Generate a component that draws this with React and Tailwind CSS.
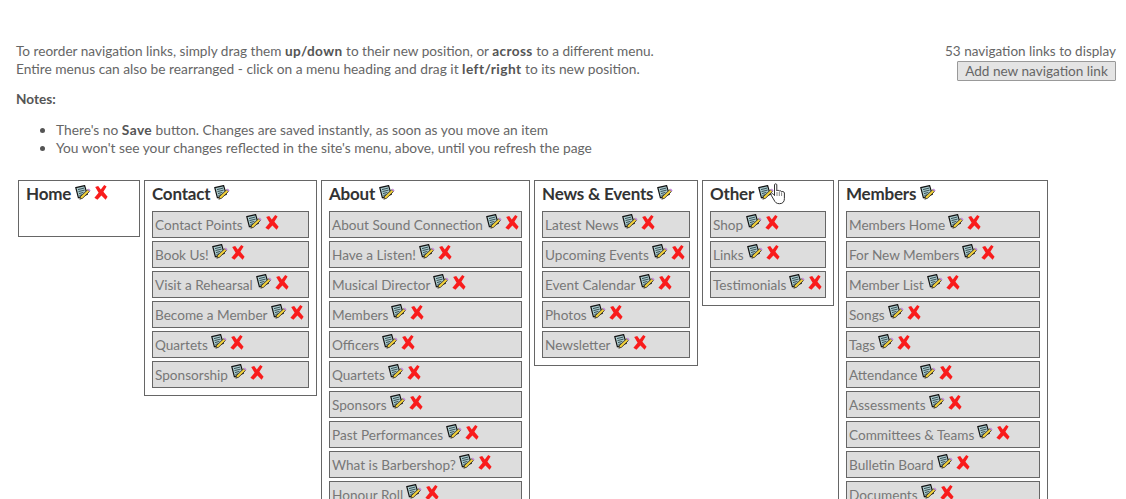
const menus = [
  { title: "Home", w: "w-[122px]", h: "h-[57px]", x: true, items: [] },
  { title: "Contact", w: "w-[173px]", h: "", items: ["Contact Points", "Book Us!", "Visit a Rehearsal", "Become a Member", "Quartets", "Sponsorship"] },
  { title: "About", w: "w-[209px]", h: "", items: ["About Sound Connection", "Have a Listen!", "Musical Director", "Members", "Officers", "Quartets", "Sponsors", "Past Performances", "What is Barbershop?", "Honour Roll"] },
  { title: "News & Events", w: "w-[164px]", h: "", items: ["Latest News", "Upcoming Events", "Event Calendar", "Photos", "Newsletter"] },
  { title: "Other", w: "w-[132px]", h: "", hand: true, items: ["Shop", "Links", "Testimonials"] },
  { title: "Members", w: "w-[210px]", h: "", items: ["Members Home", "For New Members", "Member List", "Songs", "Tags", "Attendance", "Assessments", "Committees & Teams", "Bulletin Board", "Documents"] },
];

function EditIcon() {
  return (
    <svg width="16" height="15" viewBox="0 0 16 15" className="block shrink-0">
      <path d="M0.8 2.6 L9.6 0.6 L12.2 9.4 L3.4 12.8 Z" fill="#a9c9cc" stroke="#111" strokeWidth="1.2" />
      <path d="M3 4.6 L9 3.1 M3.5 6.6 L9.6 5.1 M4 8.6 L8.4 7.4 M4.5 10.6 L7 9.7" stroke="#2e4448" strokeWidth="0.9" fill="none" />
      <path d="M4.8 14.2 L5.6 11.4 L12.6 4.8 L14.4 6.6 L7.6 13.2 Z" fill="#f4d23a" stroke="#222" strokeWidth="0.8" />
      <path d="M12.6 4.8 L13.8 3.6 L15.7 5.4 L14.4 6.6 Z" fill="#c58ad8" />
    </svg>
  );
}

function DeleteIcon() {
  return (
    <svg width="14" height="15" viewBox="0 0 14 15" className="block shrink-0">
      <path d="M1.2 2 L4.2 1 L6.8 4.4 L10.2 0 L12.6 1.4 L9.4 6.8 L13.6 11.8 L11.6 14.8 L7.4 10.6 L3.4 14.8 L0.4 12.8 L4.6 7.8 Z" fill="#f91c1c" />
    </svg>
  );
}

function Hand() {
  return (
    <svg width="16" height="22" viewBox="0 0 16 22" className="absolute left-[60px] top-[2px]">
      <path d="M4.5 1.8 C4.5 0.5 6.8 0.5 6.8 1.8 L6.8 8 C7.2 7 9 7 9.2 8.2 C9.6 7.4 11.2 7.5 11.5 8.8 C12 8.2 14.2 8.4 14.4 10 L14.4 15.5 C14.4 18.5 13 20.7 9.5 20.7 C6.5 20.7 5.2 19.4 4 17 L1.2 12.2 C0.6 10.8 2.4 10 3.4 11.2 L4.5 12.6 Z" fill="#fff" stroke="#333" strokeWidth="1" />
      <path d="M7 9 L7 13 M9.3 9 L9.3 13 M11.6 9.5 L11.6 13" stroke="#666" strokeWidth="0.8" fill="none" />
    </svg>
  );
}

function Item({ label }) {
  return (
    <div className="flex h-[27px] items-start border border-[#666] bg-[#ddd] pl-[2px] whitespace-nowrap">
      <span className="mt-[4px] leading-[18px] text-[#777]">{label}</span>
      <span className="ml-[3px] mt-[2px]"><EditIcon /></span>
      <span className="ml-[3px] mt-[3px]"><DeleteIcon /></span>
    </div>
  );
}

function Menu({ m }) {
  return (
    <div className={`${m.w} ${m.h} border border-[#666] bg-white px-[7px] shrink-0 self-start`}>
      <div className="relative flex h-[30px] items-start whitespace-nowrap">
        <span className="mt-[3px] text-[17px] leading-[20px] font-bold tracking-[-0.2px] text-[#333]">{m.title}</span>
        <span className="ml-[4px] mt-[4px]"><EditIcon /></span>
        {m.x && <span className="ml-[3px] mt-[4px]"><DeleteIcon /></span>}
        {m.hand && <Hand />}
      </div>
      {m.items.length > 0 && (
        <div className="flex flex-col gap-[3px] pb-[7px]">
          {m.items.map((i) => <Item key={i} label={i} />)}
        </div>
      )}
    </div>
  );
}

const B = ({ children }) => <b className="tracking-[0.4px] text-[#555]">{children}</b>;

export default function App() {
  return (
    <div className="h-[499px] w-[1126px] overflow-hidden bg-white font-['Lato','Liberation_Sans',sans-serif] text-[13.6px] leading-[18px] text-[#666]">
      <div className="flex justify-between pl-[16px] pr-[10px] pt-[42px]">
        <div>
          <p className="text-[13.6px]">To reorder navigation links, simply drag them <B>up/down</B> to their new position, or <B>across</B> to a different menu.</p>
          <p className="text-[13.75px]">Entire menus can also be rearranged - click on a menu heading and drag it <B>left/right</B> to its new position.</p>
        </div>
        <div className="flex flex-col items-end">
          <p className="text-[13.5px]">53 navigation links to display</p>
          <button className="mt-[1px] h-[20px] w-[159px] rounded-[1px] border border-[#999] bg-[#e4e4e4] text-[13.6px] leading-[16px] text-[#666]">Add new navigation link</button>
        </div>
      </div>
      <p className="mt-[9px] pl-[16px] font-bold text-[#555]">Notes:</p>
      <ul className="mt-[13px] list-disc pl-[56px] text-[13.75px] marker:text-[#555]">
        <li>There's no <B>Save</B> button. Changes are saved instantly, as soon as you move an item</li>
        <li>You won't see your changes reflected in the site's menu, above, until you refresh the page</li>
      </ul>
      <div className="mt-[23px] flex gap-[4px] pl-[18px]">
        {menus.map((m) => <Menu key={m.title} m={m} />)}
      </div>
    </div>
  );
}
